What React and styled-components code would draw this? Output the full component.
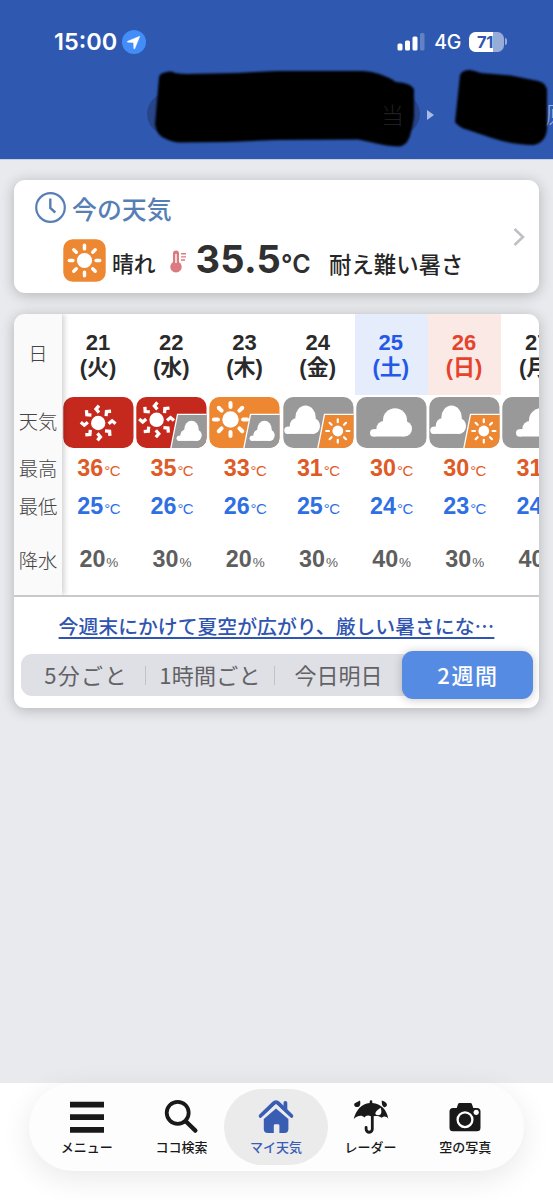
import React from 'react';
import styled, { createGlobalStyle, css } from 'styled-components';

const GlobalStyle = createGlobalStyle`
  * {
    box-sizing: border-box;
  }
  body {
    margin: 0;
    background: #e9eaee;
    font-family: "Liberation Sans", "Noto Sans CJK JP", sans-serif;
  }
`;

const RED = '#c5281c';
const ORANGE = '#ee8732';
const GRAY = '#999999';

const Screen = styled.div`
  width: 553px;
  height: 1200px;
  display: flex;
  flex-direction: column;
  overflow: hidden;
  background: #e9eaee;
`;

const Header = styled.header`
  position: relative;
  height: 160px;
  flex: none;
  background: #2f58b1;
  border-bottom: 1px solid #c9cfdd;
  overflow: hidden;
`;

const StatusBar = styled.div`
  display: flex;
  align-items: center;
  height: 83px;
  padding: 0 46px 0 54px;
  color: #fff;
  font-family: Inter, sans-serif;
`;

const Time = styled.span`
  font-size: 23.5px;
  font-weight: 600;
  width: 68px;
  white-space: nowrap;
`;

const Network = styled.span`
  font-size: 19.5px;
  font-weight: 500;
  margin: 1px 8px 0 9px;
  letter-spacing: -0.3px;
`;

const Signal = styled.svg`
  margin-left: auto;
`;

const Battery = styled.div`
  width: 35px;
  height: 20px;
  border-radius: 6.5px;
  background: linear-gradient(90deg, #fff 70%, #98acd8 70%);
  color: #2f58b1;
  font-size: 16.5px;
  font-weight: 700;
  line-height: 20px;
  padding-left: 8px;
  letter-spacing: -0.3px;
`;

const BatteryTip = styled.div`
  width: 2px;
  height: 7px;
  margin-left: 1px;
  border-radius: 0 3px 3px 0;
  background: #98acd8;
`;

const Places = styled.div`
  display: flex;
  align-items: center;
  width: 640px;
  height: 42px;
  margin-top: 10px;
  padding-left: 147px;
  font-family: "Noto Sans CJK JP", sans-serif;
  font-size: 24px;
`;

const PlaceChip = styled.div`
  width: 273px;
  height: 42px;
  border-radius: 21px;
  background: #28458a;
`;

const PlaceArrow = styled.i`
  margin: 1px 111px 0 7px;
  border-left: 7.5px solid #a9bbe2;
  border-top: 5.5px solid transparent;
  border-bottom: 5.5px solid transparent;
`;

const PlaceName = styled.span`
  color: #9db0dd;
  font-weight: 300;
  line-height: 40px;
`;

const Redaction = styled.svg`
  position: absolute;
  left: 140px;
  top: 60px;
`;

const HiddenChar = styled.span`
  position: absolute;
  left: 381px;
  top: 93px;
  font: 300 23px/42px "Noto Sans CJK JP", sans-serif;
  color: #1f1f20;
`;

const Card = styled.section`
  width: 525px;
  margin: ${({ $top }) => $top}px 0 0 14px;
  height: ${({ $height }) => $height}px;
  flex: none;
  border-radius: 11px;
  background: #fff;
  box-shadow: 0 2px 14px rgba(0, 0, 0, 0.24);
`;

const NowCard = styled(Card)`
  display: flex;
  align-items: center;
  justify-content: space-between;
  padding-right: 14px;
`;

const NowTitle = styled.h2`
  display: flex;
  align-items: center;
  gap: 5px;
  margin: 0 0 0 20px;
  height: 48px;
  padding-top: 7px;
  font: 500 24.9px/40px "Noto Sans CJK JP", sans-serif;
  color: #587fb5;
`;

const NowRow = styled.div`
  display: flex;
  align-items: flex-end;
  height: 65px;
  padding: 0 0 11px 49px;
`;

const NowText = styled.span`
  font: 500 ${({ $size }) => $size}px/38px "Noto Sans CJK JP", sans-serif;
  color: #262626;
  margin-left: ${({ $left }) => $left}px;
  white-space: nowrap;
`;

const Temperature = styled.span`
  height: 40px;
  margin: 0 0 6.5px 8px;
  font: 700 38px/46px Inter, sans-serif;
  color: #303030;
  letter-spacing: 0.2px;
  white-space: nowrap;

  small {
    font-size: 25px;
    font-weight: 600;
    letter-spacing: 0;
  }
`;

const Thermometer = styled.svg`
  margin: 0 0 8px 14px;
`;

const ForecastTable = styled.div`
  display: flex;
  height: 283px;
  overflow: hidden;
  border-bottom: 2px solid #c9c9c9;
  border-radius: 11px 11px 0 0;
`;

const column = css`
  display: grid;
  grid-template-rows: 81px 55px 38px 39px 68px;
  justify-items: center;
  align-items: center;
  flex: none;
`;

const LabelColumn = styled.div`
  ${column}
  position: relative;
  z-index: 1;
  width: 48px;
  background: #fafafa;
  box-shadow: 2px 0 6px rgba(0, 0, 0, 0.2);
  font: 300 19.3px/28px "Noto Sans CJK JP", sans-serif;
  color: #444;

  span {
    padding-bottom: 3px;
  }
`;

const DayColumn = styled.div`
  ${column}
  width: 73.2px;
`;

const dayTones = {
  weekday: { color: '#2a2a2a', background: 'transparent' },
  saturday: { color: '#2459e8', background: '#e5edfd' },
  sunday: { color: '#e5432c', background: '#fae9e5' },
};

const DayHead = styled.div`
  align-self: stretch;
  justify-self: stretch;
  padding-top: 15.5px;
  padding-right: 1px;
  text-align: center;
  font: 700 22px/25.5px "Liberation Sans", "Noto Sans CJK JP", sans-serif;
  color: ${({ $tone }) => dayTones[$tone].color};
  background: ${({ $tone }) => dayTones[$tone].background};
`;

const Value = styled.div`
  font: 700 23.3px/28px "Liberation Sans", sans-serif;
  color: ${({ $color }) => $color};
  white-space: nowrap;

  small {
    font-size: ${({ $unit }) => $unit}px;
    font-weight: 400;
    margin-left: 1px;
    letter-spacing: -0.6px;
  }
`;

const NewsLink = styled.a`
  display: block;
  height: 57px;
  text-align: center;
  font: 500 19.85px/57px "Noto Sans CJK JP", sans-serif;
  color: #2f55b0;
  text-decoration: underline;
  text-decoration-thickness: 1.6px;
  text-underline-offset: 3px;
  white-space: nowrap;
`;

const Ranges = styled.div`
  display: flex;
  align-items: center;
  width: 512px;
  height: 42px;
  margin-left: 7px;
  border-radius: 11px;
  background: #dfe0e5;
`;

const Range = styled.button`
  appearance: none;
  border: none;
  padding: 0 0 3px ${({ $indent }) => $indent || 0}px;
  position: relative;
  width: ${({ $width }) => $width}px;
  height: 42px;
  flex: none;
  background: none;
  color: #626266;
  font: 400 22px/32px "Noto Sans CJK JP", sans-serif;
  letter-spacing: ${({ $spacing }) => $spacing || 0}px;
  white-space: nowrap;

  ${({ $active }) => $active && css`
    height: 48px;
    border-radius: 11px;
    background: #568be4;
    color: #fff;
    font-weight: 500;
    box-shadow: 0 1px 10px rgba(0, 0, 0, 0.22);
  `}
`;

const Divider = styled.i`
  width: 1px;
  height: 19px;
  background: #c2c3c8;
`;

const Footer = styled.footer`
  display: flex;
  justify-content: center;
  height: 117px;
  margin-top: auto;
  padding-right: 1px;
  background: #fff;
`;

const TabBar = styled.nav`
  display: flex;
  align-items: center;
  justify-content: center;
  width: 495px;
  height: 88px;
  border-radius: 44px;
  background: #fdfdfd;
  box-shadow: 0 8px 30px rgba(0, 0, 0, 0.09);
`;

const Tab = styled.div`
  display: flex;
  flex-direction: column;
  align-items: center;
  width: ${({ $active }) => ($active ? 104 : 94.6)}px;
  margin: 0 ${({ $active }) => ($active ? -4.7 : 0)}px;
  height: 76px;
  padding-top: 9px;
  border-radius: 38px;
  background: ${({ $active }) => ($active ? '#ebebeb' : 'transparent')};
  color: ${({ $active }) => ($active ? '#3a5db4' : '#191919')};
  font: 500 13px/20px "Noto Sans CJK JP", sans-serif;

  svg {
    flex: none;
    margin-bottom: 2.5px;
  }
`;

const RAYS = [0, 45, 90, 135, 180, 225, 270, 315];

const Sun = ({ x, y, r, from, to, width }) => (
  <g transform={`translate(${x} ${y})`} stroke="#fff" strokeWidth={width} strokeLinecap="round">
    <circle r={r} fill="#fff" stroke="none" />
    {RAYS.map((angle) => (
      <path key={angle} d={`M0 ${-from}V${-to}`} transform={`rotate(${angle})`} />
    ))}
  </g>
);

const HotSun = ({ x, y }) => (
  <g transform={`translate(${x} ${y})`} fill="none" stroke="#fff" strokeWidth="3.3">
    <circle r="7.2" fill="#fff" stroke="none" />
    {RAYS.map((angle) => (
      <path key={angle} d="M.8-17.400-2.200-13.900.8-10.400" transform={`rotate(${angle})`} />
    ))}
  </g>
);

const Cloud = ({ x, y, sx = 1, sy = 1 }) => (
  <g transform={`translate(${x} ${y}) scale(${sx} ${sy})`} fill="#fff">
    <circle cx="3.6" cy="24.7" r="3.6" />
    <circle cx="14" cy="20.3" r="7.6" />
    <circle cx="25" cy="12" r="12" />
    <circle cx="34.2" cy="20.5" r="7.8" />
    <rect x="3.6" y="21" width="30.6" height="7.3" />
  </g>
);

const WeatherIcon = ({ id, base, main, sub }) => (
  <svg width="71" height="51" viewBox="0 0 71 51">
    <clipPath id={id}>
      <rect x=".3" width="70.2" height="51" rx="10" />
    </clipPath>
    <g clipPath={`url(#${id})`}>
      <rect width="71" height="51" fill={base} />
      {main === 'hot' && <HotSun x={sub ? 20.6 : 35.2} y={sub ? 22.8 : 26} />}
      {main === 'sun' && <Sun x={21.5} y={22.5} r={8.2} from={12.6} to={16.6} width={4} />}
      {main === 'cloud' && (sub ? <Cloud x={1.3} y={8.6} sx={0.85} /> : <Cloud x={14} y={11.2} />)}
      {sub && (
        <path
          d="M41.5 17.4H74V54H34.3z"
          fill={sub === 'sun' ? ORANGE : GRAY}
          stroke="#fff"
          strokeWidth="1.3"
        />
      )}
      {sub === 'sun' && <Sun x={54.8} y={34} r={5.4} from={8.8} to={11.6} width={2.2} />}
      {sub === 'cloud' && <Cloud x={40.5} y={23.8} sx={0.6} sy={0.71} />}
    </g>
  </svg>
);

const days = [
  { date: 21, day: '火', base: RED, main: 'hot', high: 36, low: 25, rain: 20 },
  { date: 22, day: '水', base: RED, main: 'hot', sub: 'cloud', high: 35, low: 26, rain: 30 },
  { date: 23, day: '木', base: ORANGE, main: 'sun', sub: 'cloud', high: 33, low: 26, rain: 20 },
  { date: 24, day: '金', base: GRAY, main: 'cloud', sub: 'sun', high: 31, low: 25, rain: 30 },
  { date: 25, day: '土', tone: 'saturday', base: GRAY, main: 'cloud', high: 30, low: 24, rain: 40 },
  { date: 26, day: '日', tone: 'sunday', base: GRAY, main: 'cloud', sub: 'sun', high: 30, low: 23, rain: 30 },
  { date: 27, day: '月', base: GRAY, main: 'cloud', high: 31, low: 24, rain: 40 },
];

const MenuIcon = () => (
  <svg width="36" height="36" viewBox="0 0 36 36" fill="currentColor">
    <path d="M1 3.800h34v5.600H1zM1 16.200h34v5.800H1zM1 29h34v5.800H1z" />
  </svg>
);

const SearchIcon = () => (
  <svg width="36" height="36" viewBox="0 0 36 36" fill="none" stroke="currentColor">
    <circle cx="14.700" cy="14.800" r="11" strokeWidth="3.800" />
    <path d="M23 23.500 32.400 32.600" strokeWidth="4.300" strokeLinecap="round" />
  </svg>
);

const HomeIcon = () => (
  <svg width="36" height="36" viewBox="0 -1 36 36" fill="currentColor">
    <path d="M18 9.400 30.400 20v10a4 4 0 0 1-4 4h-5v-7.500a1.300 1.300 0 0 0-1.300-1.300h-3a1.300 1.300 0 0 0-1.300 1.300V34h-6a4 4 0 0 1-4-4V20z" />
    <path d="M2.800 17 15.600 4.300a3.400 3.400 0 0 1 4.800 0L33.200 17" fill="none" stroke="currentColor" strokeWidth="4" strokeLinecap="round" />
    <path d="M2.800 20.200 18 6.400l15.200 13.800" fill="none" stroke="#ebebeb" strokeWidth="1.600" />
    <path d="M25.500 3.800a1.900 1.900 0 0 1 3.800 0V11l-3.800-3.600z" />
  </svg>
);

const UmbrellaIcon = () => (
  <svg width="36" height="36" viewBox="0 1 36 36" fill="currentColor">
    <path d="M16.700 4.500a1.300 1.300 0 0 1 2.600 0V6C28 6.500 34 13 35.300 21.800c-1.600-2.800-4.600-3.200-6.600-1-2.300-1.800-5-2-8-1.500V32a4.500 4.500 0 0 1-9 .300v-2a1.400 1.400 0 0 1 2.800 0V32a1.700 1.700 0 0 0 3.400 0V19.300c-2.600-1.400-5.300-.800-6.500 1.200-2.400-2.600-6.600-2.200-10.700 1.500C3 13 8.700 6.600 16.700 6z" />
    <path d="M1.800 6.200 7 3.400c.9 3.600 0 6.600-2.700 6.600-3 0-3.800-2.300-2.500-3.800zM28.800 3.400c3.800 1.200 6.400 3.600 4.600 5.900-1.900 2-5 .5-4.600-5.900z" />
    <path d="M27.600 10.800c1.400 4.200 1 7.500-2.400 7.500-4.400 0-3.700-3.800 2.400-7.500z" fill="#fdfdfd" />
  </svg>
);

const CameraIcon = () => (
  <svg width="36" height="36" viewBox="0 1 36 36">
    <path d="M12.500 6h11a1.500 1.500 0 0 1 1.400 1l1.400 4H30a3.500 3.500 0 0 1 3.500 3.500v16.200a3.500 3.500 0 0 1-3.500 3.500H6a3.500 3.500 0 0 1-3.500-3.500V14.500A3.500 3.500 0 0 1 6 11h3.700l1.400-4a1.500 1.500 0 0 1 1.400-1z" fill="currentColor" />
    <circle cx="18" cy="22.700" r="7.400" fill="none" stroke="#fff" strokeWidth="2.300" />
    <circle cx="29.200" cy="15.300" r="2.600" fill="#fff" />
  </svg>
);

const tabs = [
  { label: 'メニュー', Icon: MenuIcon },
  { label: 'ココ検索', Icon: SearchIcon },
  { label: 'マイ天気', Icon: HomeIcon, active: true },
  { label: 'レーダー', Icon: UmbrellaIcon },
  { label: '空の写真', Icon: CameraIcon },
];

const PageHeader = () => (
  <Header>
    <StatusBar>
      <Time>15:00</Time>
      <svg width="24" height="24" viewBox="0 0 24 24">
        <circle cx="12" cy="12" r="12" fill="#428df7" />
        <path d="M17.800 6.200 12.800 18.600q-.7 1-1-.3l-.2-5.900-5.700-.2q-1.500-.3-.2-1z" fill="#fff" stroke="#fff" strokeWidth=".5" strokeLinejoin="round" />
      </svg>
      <Signal width="28" height="19" viewBox="0 0 28 19" fill="#fff">
        <rect x=".5" y="11.500" width="5" height="7" rx="1.500" />
        <rect x="8" y="8.500" width="5" height="10" rx="1.500" />
        <rect x="15.500" y="4.500" width="5" height="14" rx="1.500" />
        <rect x="23" y="1" width="4.500" height="17.500" rx="1.500" opacity=".25" />
      </Signal>
      <Network>4G</Network>
      <Battery>71</Battery>
      <BatteryTip />
    </StatusBar>
    <Places>
      <PlaceChip />
      <PlaceArrow />
      <PlaceName>原</PlaceName>
    </Places>
    <Redaction width="413" height="96" viewBox="140 60 413 96">
      <filter id="soft" x="-5%" y="-10%" width="110%" height="120%">
        <feGaussianBlur stdDeviation="1.1" />
      </filter>
      <g filter="url(#soft)">
        <path d="M159 77q1-4 6-4.500 6-2 10 .5 6 1 12 1l50-1L277 71h86q18 1 33 11 15 1 18 7v28q-1 8-3 15-2 12-11 14.500-12 0-30-4.500l-12-2.500-81 .5-50 2-47 .5q-7 0-15-4-8-3-10-14z" />
        <path d="M460 75q2-5 10-5 5 1 11 3l30 2.500 22 4.500q12 1 14 9v40q-1 13-13 16-22 0-42-7l-24-8q-10-3-13-8z" />
      </g>
    </Redaction>
    <HiddenChar>当</HiddenChar>
  </Header>
);

const CurrentWeather = () => (
  <NowCard $top={20} $height={113}>
    <div>
      <NowTitle>
        <svg width="33" height="33" viewBox="0 0 33 33" fill="none" stroke="#587fb5">
          <circle cx="16.500" cy="16.500" r="14.300" strokeWidth="2.200" />
          <path d="M16.300 7.500v9.500l5 4.500" strokeWidth="2.400" />
        </svg>
        今の天気
      </NowTitle>
      <NowRow>
        <svg width="43" height="43" viewBox="0 0 43 43">
          <rect x=".3" y=".3" width="42.400" height="42.400" rx="9.500" fill={ORANGE} />
          <Sun x={21.5} y={21.500} r={7.6} from={11.6} to={15.2} width={3.400} />
        </svg>
        <NowText $size={21.8} $left={6}>晴れ</NowText>
        <Thermometer width="18" height="24" viewBox="0 0 18 24" fill="#db7a7f">
          <path d="M3 3.500a3 3 0 0 1 6 0V12a5.700 5.700 0 1 1-6 0z" />
          <path d="M6 4v9" stroke="#fff" strokeWidth="1.400" />
          <path d="M11 3.800h5M11 6.900h5M11 10h4" stroke="#db7a7f" strokeWidth="1.400" />
        </Thermometer>
        <Temperature>35.5<small>°C</small></Temperature>
        <NowText $size={22.4} $left={18.5}>耐え難い暑さ</NowText>
      </NowRow>
    </div>
    <svg width="12" height="20" viewBox="0 0 12 20" fill="none" stroke="#bfc0c5" strokeWidth="2.600">
      <path d="M1.500 2 10 10 1.500 18" />
    </svg>
  </NowCard>
);

const Forecast = () => (
  <Card $top={21} $height={394}>
    <ForecastTable>
      <LabelColumn>
        <span>日</span>
        <span>天気</span>
        <span>最高</span>
        <span>最低</span>
        <span>降水</span>
      </LabelColumn>
      {days.map(({ date, day, tone = 'weekday', high, low, rain, ...icon }) => (
        <DayColumn key={date}>
          <DayHead $tone={tone}>{date}<br />({day})</DayHead>
          <WeatherIcon id={`day-${date}`} {...icon} />
          <Value $color="#de5a26" $unit={15}>{high}<small>°C</small></Value>
          <Value $color="#2f6fe4" $unit={15}>{low}<small>°C</small></Value>
          <Value $color="#5e5e5e" $unit={13.5}>{rain}<small>%</small></Value>
        </DayColumn>
      ))}
    </ForecastTable>
    <NewsLink>今週末にかけて夏空が広がり、厳しい暑さにな…</NewsLink>
    <Ranges>
      <Range $width={124} $spacing={1.3} $indent={6}>5分ごと</Range>
      <Divider />
      <Range $width={128} $spacing={0.3}>1時間ごと</Range>
      <Divider />
      <Range $width={127}>今日明日</Range>
      <Range $width={131} $spacing={1.6} $indent={1} $active>2週間</Range>
    </Ranges>
  </Card>
);

const App = () => (
  <>
    <GlobalStyle />
    <Screen>
      <PageHeader />
      <CurrentWeather />
      <Forecast />
      <Footer>
        <TabBar>
          {tabs.map(({ label, Icon, active }) => (
            <Tab key={label} $active={active}>
              <Icon />
              {label}
            </Tab>
          ))}
        </TabBar>
      </Footer>
    </Screen>
  </>
);

export default App;
